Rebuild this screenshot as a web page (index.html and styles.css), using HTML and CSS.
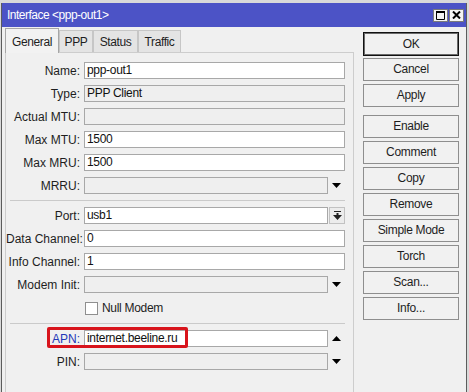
FILE: index.html
```html
<!DOCTYPE html>
<html lang="en">
<head>
  <meta charset="UTF-8" />
  <title>Interface &lt;ppp-out1&gt;</title>
  <link rel="stylesheet" href="styles.css">
</head>
<body>
  <div class="window">
    <div class="titlebar">
      <span class="title">Interface &lt;ppp-out1&gt;</span>
      <div class="title-btns">
        <span class="tbtn">
          <svg width="9" height="9" viewBox="0 0 9 9"><path d="M0.5 0.5h8v8h-8z" fill="none" stroke="#000"/><path d="M0 0h9v2h-9z"/></svg>
        </span>
        <span class="tbtn">
          <svg width="9" height="8" viewBox="0 0 9 8"><path d="M1 0.5l7 7M8 0.5l-7 7" stroke="#000" stroke-width="2"/></svg>
        </span>
      </div>
    </div>

    <div class="main">
      <div class="left">
        <div class="tabs">
          <div class="tab active tab-general">General</div>
          <div class="tab tab-ppp">PPP</div>
          <div class="tab tab-status">Status</div>
          <div class="tab tab-traffic">Traffic</div>
        </div>

        <div class="panel">
          <div class="row"><label>Name:</label><div class="field"><div class="box">ppp-out1</div></div></div>
          <div class="row"><label>Type:</label><div class="field"><div class="box ro">PPP Client</div></div></div>
          <div class="row"><label>Actual MTU:</label><div class="field"><div class="box ro"></div></div></div>
          <div class="row"><label>Max MTU:</label><div class="field"><div class="box">1500</div></div></div>
          <div class="row"><label>Max MRU:</label><div class="field"><div class="box">1500</div></div></div>
          <div class="row">
            <label>MRRU:</label>
            <div class="field">
              <div class="box ro"></div>
              <span class="arrow"><svg width="9" height="5"><path d="M0 0h9L4.5 5z"/></svg></span>
            </div>
          </div>

          <div class="sep"></div>

          <div class="row">
            <label>Port:</label>
            <div class="field">
              <div class="box">usb1</div>
              <span class="dbtn">
                <svg width="9" height="9"><path d="M1 0h7v1h-7z M3.5 2h2v2h-2z M0 4h9L4.5 9z" fill="#222"/></svg>
              </span>
            </div>
          </div>
          <div class="row"><label>Data Channel:</label><div class="field"><div class="box">0</div></div></div>
          <div class="row"><label>Info Channel:</label><div class="field"><div class="box">1</div></div></div>
          <div class="row">
            <label>Modem Init:</label>
            <div class="field">
              <div class="box ro"></div>
              <span class="arrow"><svg width="9" height="5"><path d="M0 0h9L4.5 5z"/></svg></span>
            </div>
          </div>
          <div class="row check-row">
            <span></span>
            <div class="check"><span class="checkbox"></span>Null Modem</div>
          </div>

          <div class="sep"></div>

          <div class="row apn-row">
            <label class="blue">APN:</label>
            <div class="field">
              <div class="box">internet.beeline.ru</div>
              <span class="arrow"><svg width="9" height="5"><path d="M0 5h9L4.5 0z"/></svg></span>
            </div>
            <div class="highlight"></div>
          </div>
          <div class="row">
            <label>PIN:</label>
            <div class="field">
              <div class="box ro"></div>
              <span class="arrow"><svg width="9" height="5"><path d="M0 0h9L4.5 5z"/></svg></span>
            </div>
          </div>
        </div>
      </div>

      <div class="buttons">
        <div class="btn ok">OK</div>
        <div class="btn">Cancel</div>
        <div class="btn">Apply</div>
        <div class="btn split">Enable</div>
        <div class="btn">Comment</div>
        <div class="btn">Copy</div>
        <div class="btn">Remove</div>
        <div class="btn">Simple Mode</div>
        <div class="btn">Torch</div>
        <div class="btn">Scan...</div>
        <div class="btn">Info...</div>
      </div>
    </div>
  </div>
</body>
</html>
```

FILE: styles.css
```css
body {
  margin: 0;
  padding-top: 3px;
  background: #d9d9d9;
  font-family: "Liberation Sans", Arial, sans-serif;
  font-size: 12px;
  color: #1e1e1e;
}

.window {
  margin-left: 1px;
  width: 464px;
  height: 389px;
  border-left: 1px solid #5c5c5c;
  border-right: 1px solid #5c5c5c;
  background: #f0f0f0;
  display: flex;
  flex-direction: column;
}

.titlebar {
  height: 24px;
  flex: none;
  background: #4c53c6;
  color: #fff;
  display: flex;
  align-items: center;
  justify-content: space-between;
  padding: 0 2px 0 5px;
}

.title {
  letter-spacing: -0.5px;
}

.title-btns {
  display: flex;
  gap: 1px;
}

.tbtn {
  width: 15px;
  height: 13px;
  box-sizing: border-box;
  border: 1px solid #7a7a7a;
  background: #f4f4f4;
  display: flex;
  align-items: center;
  justify-content: center;
}

.main {
  flex: 1;
  display: flex;
}

.left {
  width: 352px;
  display: flex;
  flex-direction: column;
}

.tabs {
  display: flex;
  align-items: flex-end;
  height: 25px;
  padding-left: 3px;
}

.tab {
  height: 22px;
  box-sizing: border-box;
  padding-top: 3px;
  line-height: 17px;
  text-align: center;
  letter-spacing: -0.4px;
  border: 1px solid #c6c6c6;
  border-bottom: none;
  background: #e4e4e4;
}

.tab.active {
  height: 25px;
  padding-top: 5px;
  background: #f2f2f2;
  border-color: #a6a6a6;
  margin-bottom: -1px;
  position: relative;
}

.tab-general { width: 54px; }
.tab-ppp { width: 34px; }
.tab-status { width: 45px; }
.tab-traffic { width: 43px; }

.panel {
  flex: 1;
  margin-left: 3px;
  width: 349px;
  box-sizing: border-box;
  border: 1px solid #cdcdcd;
  border-bottom: none;
  padding: 9px 8px 0 0;
  display: flex;
  flex-direction: column;
  gap: 6px;
}

.row {
  display: grid;
  grid-template-columns: 74px 1fr;
  column-gap: 4px;
  height: 17px;
  align-items: center;
}

.row label {
  text-align: right;
  white-space: nowrap;
}

.row label.blue {
  color: #2438b8;
}

.field {
  display: flex;
  height: 17px;
}

.box {
  flex: 1;
  height: 17px;
  box-sizing: border-box;
  border: 1px solid #a8a8a8;
  background: #fff;
  padding-left: 2px;
  line-height: 15px;
  letter-spacing: -0.3px;
  color: #111;
}

.box.ro {
  background: #efefef;
}

.arrow {
  width: 17px;
  display: flex;
  align-items: center;
  justify-content: center;
}

.dbtn {
  width: 16px;
  height: 17px;
  margin-left: 1px;
  box-sizing: border-box;
  border: 1px solid #c2c2c2;
  background: #ececec;
  display: flex;
  align-items: center;
  justify-content: center;
}

.sep {
  height: 1px;
  margin-left: 4px;
  background: #cacaca;
}

.check-row {
  height: 18px;
}

.check {
  display: flex;
  align-items: center;
  gap: 4px;
  padding-left: 1px;
  letter-spacing: -0.3px;
}

.checkbox {
  width: 13px;
  height: 13px;
  box-sizing: border-box;
  border: 1px solid #8f8f8f;
  background: #fff;
}

.apn-row {
  position: relative;
}

.highlight {
  position: absolute;
  left: 41px;
  top: -3px;
  width: 141px;
  height: 21px;
  box-sizing: border-box;
  border: 3px solid #d8141c;
  border-radius: 2px;
}

.buttons {
  padding: 5px 0 0 9px;
  display: flex;
  flex-direction: column;
}

.btn {
  width: 96px;
  height: 23px;
  box-sizing: border-box;
  margin-bottom: 3px;
  border: 1px solid #8e8e8e;
  background: #f1f1f1;
  text-align: center;
  line-height: 21px;
  letter-spacing: -0.3px;
  color: #1e1e1e;
}

.btn.ok {
  height: 24px;
  margin-bottom: 2px;
  border-color: #111;
  box-shadow: inset 0 0 0 1px #6a6a6a;
  line-height: 22px;
}

.btn.split {
  margin-top: 5px;
}
```
